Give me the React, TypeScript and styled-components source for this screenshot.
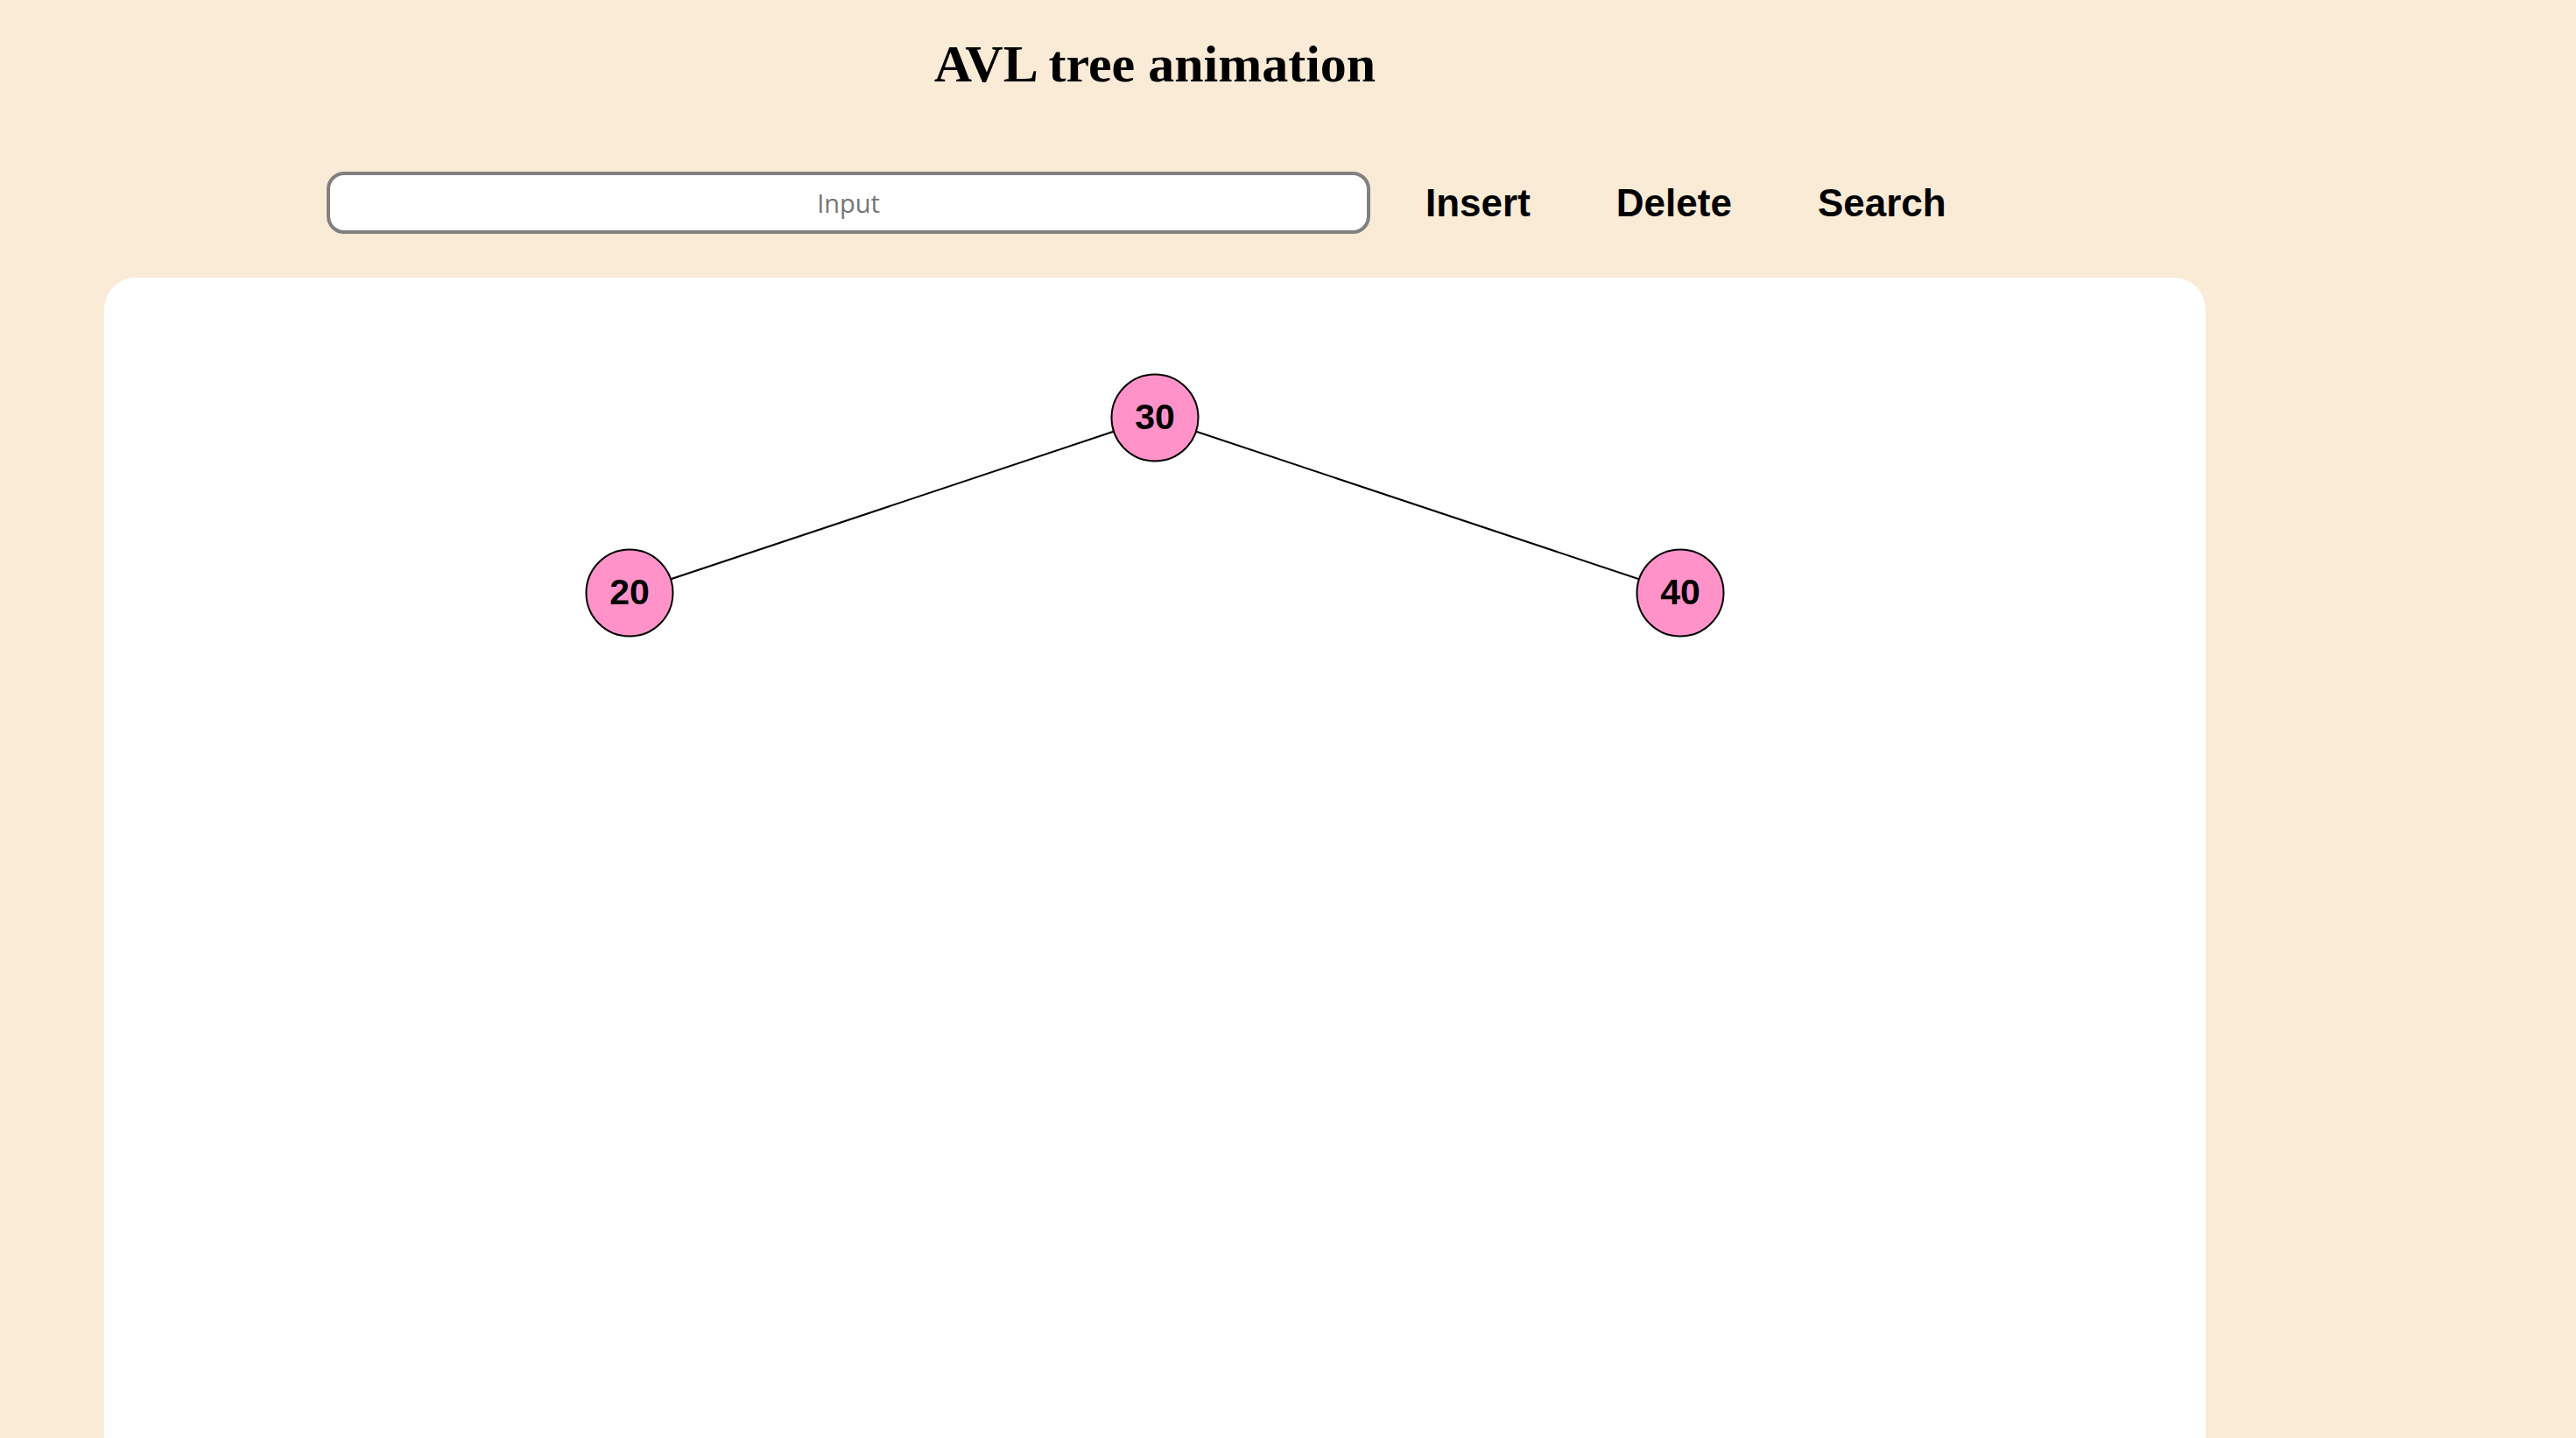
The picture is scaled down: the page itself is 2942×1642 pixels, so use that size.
import styled, { createGlobalStyle } from 'styled-components';

const GlobalStyle = createGlobalStyle`
  html, body {
    margin: 0;
    padding: 0;
    background-color: #faebd7;
    overflow: hidden;
  }
`;

const Page = styled.div`
  display: flex;
  flex-direction: column;
  width: 2400px;
  padding: 39px 0 0 119px;
`;

const Title = styled.h1`
  margin: 0;
  text-align: center;
  font-family: 'Liberation Serif', 'Times New Roman', serif;
  font-size: 60px;
  line-height: 68px;
  font-weight: 700;
  color: #000;
`;

const Toolbar = styled.div`
  display: flex;
  flex-direction: row;
  align-items: center;
  margin: 89px 0 0 254px;
`;

const Input = styled.input`
  box-sizing: border-box;
  width: 1192px;
  height: 71px;
  margin-right: 14px;
  border: 4px solid #808080;
  border-radius: 20px;
  background-color: #fff;
  text-align: center;
  font-family: 'Open Sans', 'Liberation Sans', sans-serif;
  font-size: 29px;
  outline: none;
  &::placeholder {
    color: #757575;
  }
`;

const ActionButton = styled.button`
  background: none;
  border: none;
  padding: 0 49px;
  font-family: 'Liberation Sans', Arial, sans-serif;
  font-size: 44px;
  font-weight: 700;
  color: #000;
  cursor: pointer;
`;

const Board = styled.div`
  margin-top: 50px;
  width: 2400px;
  height: 1400px;
  background-color: #fff;
  border-radius: 36px;
  overflow: hidden;
`;

const NodeLabel = styled.text`
  font-family: 'Liberation Sans', Arial, sans-serif;
  font-size: 41px;
  font-weight: 700;
  fill: #000;
`;

interface TreeNode {
  value: number;
  x: number;
  y: number;
}

const nodes: TreeNode[] = [
  { value: 30, x: 1200, y: 160 },
  { value: 20, x: 600, y: 360 },
  { value: 40, x: 1800, y: 360 },
];

const edges: [number, number][] = [
  [0, 1],
  [0, 2],
];

function Tree() {
  return (
    <svg width="2400" height="1400" viewBox="0 0 2400 1400">
      {edges.map(([a, b]) => (
        <line
          key={`${a}-${b}`}
          x1={nodes[a].x}
          y1={nodes[a].y}
          x2={nodes[b].x}
          y2={nodes[b].y}
          stroke="#000"
          strokeWidth="2"
        />
      ))}
      {nodes.map((n) => (
        <g key={n.value}>
          <circle cx={n.x} cy={n.y} r="49.5" fill="#ff93c9" stroke="#000" strokeWidth="2" />
          <NodeLabel x={n.x} y={n.y + 13} textAnchor="middle">
            {n.value}
          </NodeLabel>
        </g>
      ))}
    </svg>
  );
}

function App() {
  return (
    <>
      <GlobalStyle />
      <Page>
        <Title>AVL tree animation</Title>
        <Toolbar>
          <Input placeholder="Input" />
          <ActionButton>Insert</ActionButton>
          <ActionButton>Delete</ActionButton>
          <ActionButton>Search</ActionButton>
        </Toolbar>
        <Board>
          <Tree />
        </Board>
      </Page>
    </>
  );
}

export default App;
